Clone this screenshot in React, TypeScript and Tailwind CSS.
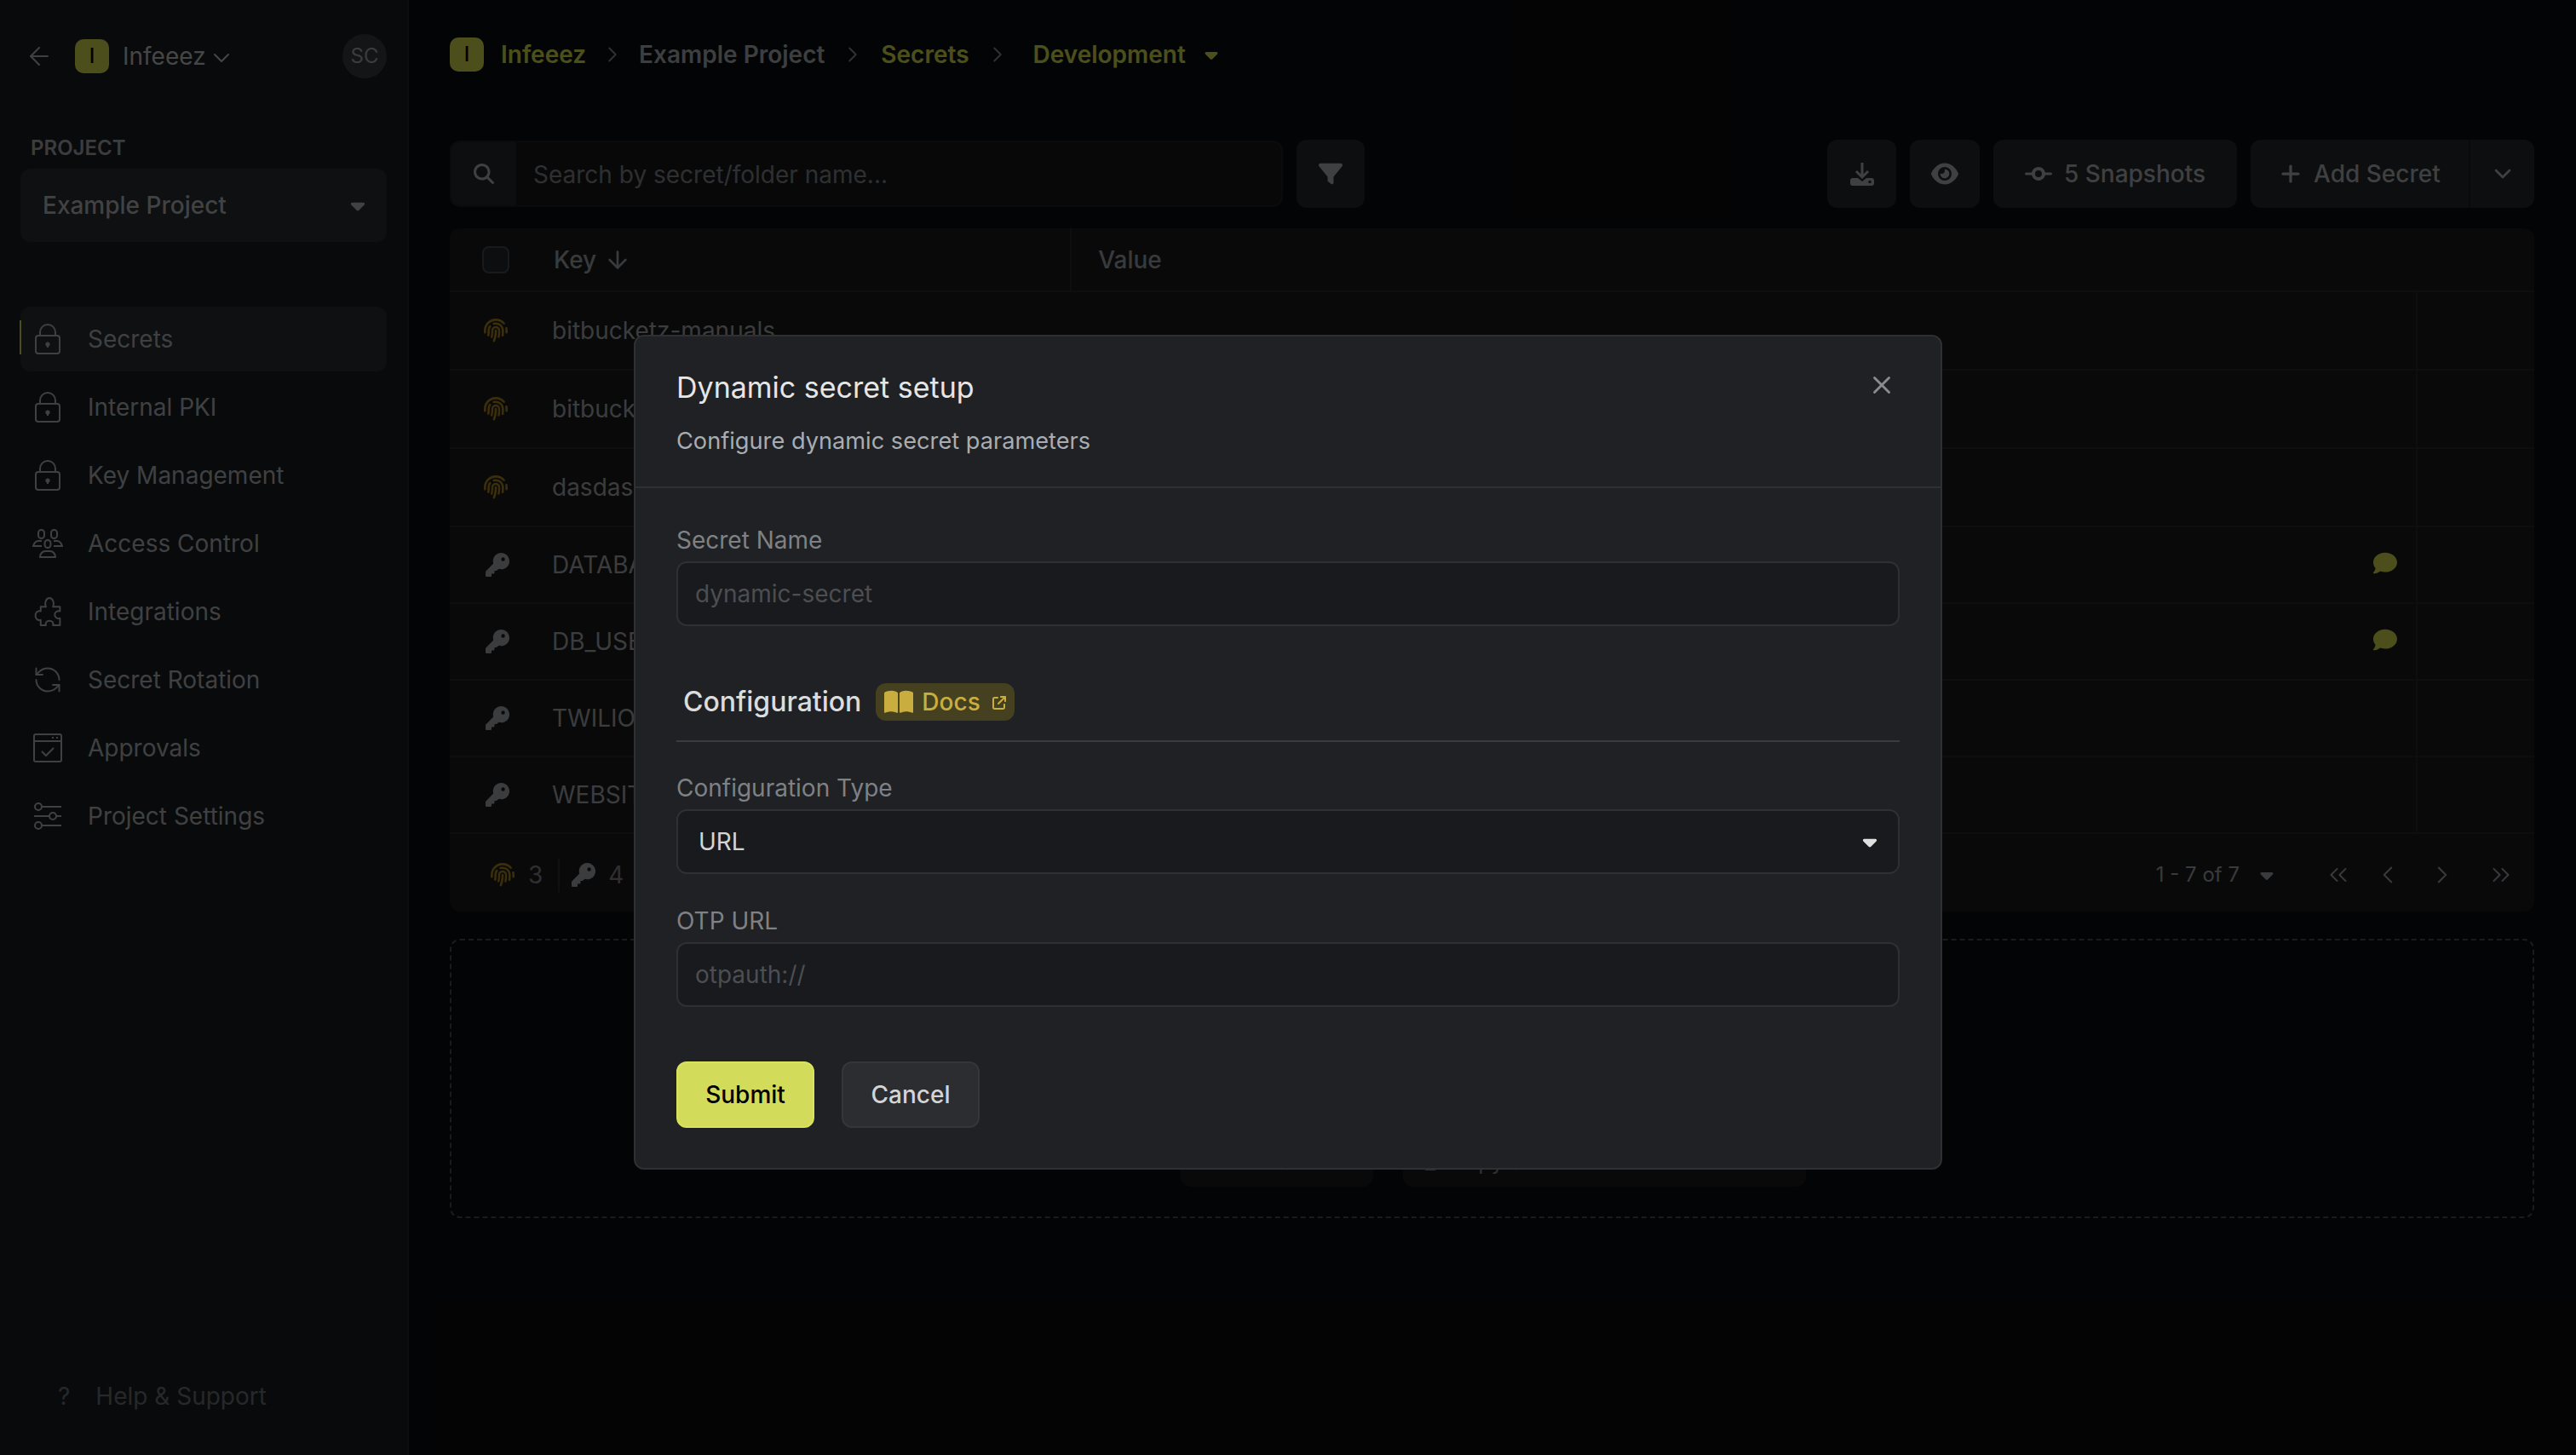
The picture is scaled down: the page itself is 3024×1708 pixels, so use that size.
import {
  ArrowDown,
  ArrowLeft,
  ChevronDown,
  ChevronLeft,
  ChevronRight,
  ChevronsLeft,
  ChevronsRight,
  RefreshCcw,
  X,
} from "lucide-react";
import {
  FaArrowUpRightFromSquare,
  FaBookOpen,
  FaCaretDown,
  FaCodeCommit,
  FaComment,
  FaCopy,
  FaEye,
  FaFilter,
  FaFingerprint,
  FaKey,
  FaMagnifyingGlass,
  FaPlus,
} from "react-icons/fa6";

const LockIcon = () => (
  <svg viewBox="0 0 30 36" className="h-9 w-[30px]" fill="none" stroke="currentColor" strokeWidth={2}>
    <rect x="1" y="14" width="28" height="21" rx="3" />
    <path d="M6 14V10a9 9 0 0 1 18 0v4" />
    <circle cx="15" cy="24" r="1.6" fill="currentColor" />
    <path d="M15 25v3" />
  </svg>
);

const TeamIcon = () => (
  <svg viewBox="0 0 36 36" className="h-9 w-9" fill="none" stroke="currentColor" strokeWidth={2}>
    <rect x="7" y="2" width="7" height="10" rx="3.5" />
    <rect x="22" y="2" width="7" height="10" rx="3.5" />
    <rect x="14.5" y="14" width="7" height="9" rx="3.5" />
    <path d="M11 15H7c-3 0-5 3-6 6h10" />
    <path d="M25 15h4c3 0 5 3 6 6H25" />
    <path d="M9 34c0-4 3-7 6-7h6c3 0 6 3 6 7z" />
  </svg>
);

const PuzzleIcon = () => (
  <svg
    viewBox="0 0 30 35"
    className="h-9 w-8"
    fill="none"
    stroke="currentColor"
    strokeWidth={1.9}
    strokeLinejoin="round"
  >
    <path d="M7 33v-6c-4 1-6-2-6-5s2-6 6-5V12h6c-2-4 0-10 4-10s6 6 4 10h8v5c-3-1-6 1-6 4s3 5 6 4v8h-8c1-3-1-5-4-5s-5 2-4 5z" />
  </svg>
);

const ApprovalsIcon = () => (
  <svg viewBox="0 0 34 34" className="h-[34px] w-[34px]" fill="none" stroke="currentColor" strokeWidth={2}>
    <rect x="1" y="1" width="32" height="32" rx="2" />
    <path d="M1 9h32" />
    <path d="M22 5h2M27 5h2" />
    <path d="M10 21l5 5 9-9" />
  </svg>
);

const SlidersIcon = () => (
  <svg viewBox="0 0 34 34" className="h-[34px] w-[34px]" fill="none" stroke="currentColor" strokeWidth={2}>
    <circle cx="6" cy="6" r="4" />
    <path d="M10 6h23" />
    <circle cx="23" cy="17" r="4" />
    <path d="M1 17h18M27 17h6" />
    <circle cx="6" cy="28" r="4" />
    <path d="M10 28h23" />
  </svg>
);

const TrayDownloadIcon = () => (
  <svg viewBox="0 0 28 27" className="h-[27px] w-[28px]" fill="currentColor">
    <path d="M14 0v16M7 10l7 7 7-7" fill="none" stroke="currentColor" strokeWidth={3} />
    <path d="M3 18h6l5 4 5-4h6a3 3 0 0 1 3 3v3a3 3 0 0 1-3 3H3a3 3 0 0 1-3-3v-3a3 3 0 0 1 3-3z" />
    <circle cx="23" cy="22.5" r="1.7" fill="#26292d" />
  </svg>
);

const navItems = [
  { label: "Secrets", icon: <LockIcon />, active: true },
  { label: "Internal PKI", icon: <LockIcon /> },
  { label: "Key Management", icon: <LockIcon /> },
  { label: "Access Control", icon: <TeamIcon /> },
  { label: "Integrations", icon: <PuzzleIcon /> },
  { label: "Secret Rotation", icon: <RefreshCcw size={36} strokeWidth={1.3} /> },
  { label: "Approvals", icon: <ApprovalsIcon /> },
  { label: "Project Settings", icon: <SlidersIcon /> },
];

const rows = [
  { name: "bitbucketz-manuals", dynamic: true, height: "h-[92px]" },
  { name: "bitbucketz-manuals", dynamic: true, height: "h-[92px]" },
  { name: "dasdasdas", dynamic: true, height: "h-[92px]" },
  { name: "DATABASE_URL", comment: true, height: "h-[90px]" },
  { name: "DB_USER", comment: true, height: "h-[90px]" },
  { name: "TWILIO_AUTH_TOKEN", height: "h-[90px]" },
  { name: "WEBSITE_URL", height: "h-[90px]" },
];

const Sidebar = () => (
  <aside className="flex w-[480px] shrink-0 flex-col border-r-2 border-[#24272a] bg-[#1c1f22]">
    <div className="flex h-[134px] items-center justify-between pl-[29px] pr-[24px] pb-[2px]">
      <div className="flex items-center">
        <ArrowLeft size={34} strokeWidth={1.5} className="text-[#b5b8bc]" />
        <span className="ml-[25px] flex h-10 w-10 items-center justify-center rounded-[10px] bg-[#dbe24f] text-[24px] font-medium text-black">
          I
        </span>
        <span className="ml-[16px] text-[28px] text-[#c6c9cc]">Infeeez</span>
        <ChevronDown size={32} strokeWidth={1.5} className="ml-[2px] mt-1 text-[#c6c9cc]" />
      </div>
      <span className="flex h-[52px] w-[52px] items-center justify-center rounded-full bg-[#3a3d41] text-[24px] text-[#a8abaf]">
        SC
      </span>
    </div>
    <p className="ml-[36px] mt-[24px] text-[24px] leading-8 font-semibold text-[#a9acb0]">PROJECT</p>
    <div className="mx-6 mt-[8px] flex h-[86px] items-center justify-between rounded-xl bg-[#2a2e33] pl-[26px] pr-[21px]">
      <span className="text-[28px] font-medium text-[#b9bcc0]">Example Project</span>
      <FaCaretDown size={26} className="text-[#b9bcc0]" />
    </div>
    <nav className="mt-[74px] flex flex-col">
      {navItems.map((item) => (
        <div key={item.label} className="relative mx-6 flex h-20 items-center py-[2px]">
          <div
            className={`flex h-full w-full items-center rounded-xl pl-[14px] ${item.active ? "bg-[#2a2e33]" : ""}`}
          >
            <span className="flex w-[36px] justify-center text-[#b5b8bc]">{item.icon}</span>
            <span className="ml-[29px] text-[28px] text-[#b5b8bc]">{item.label}</span>
          </div>
          {item.active && <span className="absolute -left-px top-[18px] h-10 w-[2px] bg-[#dbe24f]" />}
        </div>
      ))}
    </nav>
    <div className="mt-auto mb-[48px] ml-[68px] flex items-center text-[#6f7276]">
      <span className="text-[28px] font-normal">?</span>
      <span className="ml-[30px] text-[28px]">Help &amp; Support</span>
    </div>
  </aside>
);

const ToolButton = ({ className, children }: { className: string; children: React.ReactNode }) => (
  <div className={`flex h-20 items-center justify-center rounded-xl bg-[#26292d] text-[#b5b8bc] ${className}`}>
    {children}
  </div>
);

const Breadcrumbs = () => (
  <div className="flex h-[126px] items-center pt-[2px] text-[28px] font-semibold">
    <span className="flex h-10 w-10 items-center justify-center rounded-[10px] bg-[#dbe24f] text-[24px] font-medium text-black">
      I
    </span>
    <span className="ml-5 text-[#dbe24f]">Infeeez</span>
    <ChevronRight size={30} strokeWidth={1.5} className="mx-4 text-[#8b8e92]" />
    <span className="text-[#aeb1b5]">Example Project</span>
    <ChevronRight size={30} strokeWidth={1.5} className="mx-[18px] text-[#8b8e92]" />
    <span className="text-[#dbe24f]">Secrets</span>
    <ChevronRight size={30} strokeWidth={1.5} className="ml-[18px] mr-[27px] text-[#8b8e92]" />
    <span className="text-[#dbe24f]">Development</span>
    <FaCaretDown size={24} className="ml-[18px] text-[#dbe24f]" />
  </div>
);

const SecretsTable = () => (
  <div className="mt-6 rounded-xl bg-[#1a1c1f]">
    <div className="flex h-[75px] items-center border-b-2 border-[#26282b]">
      <span className="ml-[38px] h-8 w-8 rounded-lg border-2 border-[#494c50] bg-[#26292d]" />
      <span className="ml-[52px] text-[28px] font-medium text-[#a2a5a9]">Key</span>
      <ArrowDown size={32} strokeWidth={2} className="ml-[9px] text-[#a2a5a9]" />
      <span className="ml-[515px] flex h-full items-center border-l-2 border-[#26282b] pl-[31px] text-[28px] font-medium text-[#a2a5a9]">
        Value
      </span>
    </div>
    {rows.map((row, i) => (
      <div key={i} className={`flex items-center border-b-2 border-[#26282b] ${row.height}`}>
        <span className={`ml-[40px] w-[28px] ${row.dynamic ? "text-[#a9841f]" : "text-[#a8abaf]"}`}>
          {row.dynamic ? <FaFingerprint size={28} /> : <FaKey size={28} className="ml-[2px]" />}
        </span>
        <span className="ml-[52px] w-[2069px] text-[28px] text-[#a8abaf]">{row.name}</span>
        <span className="mb-[4px] ml-[69px] w-[28px] text-[#dbe24f]">{row.comment && <FaComment size={28} />}</span>
        <span className="ml-[22px] h-full border-l-2 border-[#26282b]" />
      </div>
    ))}
    <div className="flex h-[91px] items-center pt-[5px] text-[#85888c]">
      <FaFingerprint size={28} className="ml-[48px] text-[#a9841f]" />
      <span className="ml-[16px] text-[28px]">3</span>
      <span className="ml-[18px] h-10 border-l-2 border-[#2f3236]" />
      <FaKey size={28} className="ml-[14px] text-[#a8abaf]" />
      <span className="ml-[15px] text-[28px]">4</span>
      <span className="ml-auto text-[24px] text-[#a2a5a9]">1 - 7 of 7</span>
      <FaCaretDown size={24} className="ml-[20px] text-[#a2a5a9]" />
      <div className="ml-[55px] mr-[22px] flex items-center text-[#a2a5a9]">
        <ChevronsLeft size={34} strokeWidth={1.4} />
        <ChevronLeft size={34} strokeWidth={1.4} className="ml-6" />
        <ChevronRight size={34} strokeWidth={1.4} className="ml-[30px]" />
        <ChevronsRight size={34} strokeWidth={1.4} className="ml-[35px]" />
      </div>
    </div>
  </div>
);

const FieldLabel = ({ children }: { children: React.ReactNode }) => (
  <label className="block text-[28px] leading-10 text-[#7e8185]">{children}</label>
);

const TextInput = ({ placeholder }: { placeholder: string }) => (
  <input
    readOnly
    placeholder={placeholder}
    className="mt-[5px] block h-[76px] w-full rounded-xl border-2 border-[#2e3034] bg-[#191a1d] px-[20px] text-[28px] text-[#d4d4d4] outline-none placeholder:text-[#4c4e52]"
  />
);

const SetupModal = () => (
  <div className="absolute inset-0 bg-black/65">
    <div className="mx-auto mt-[393px] h-[980px] w-[1536px] rounded-xl border-2 border-[#2e3034] bg-[#1f2124]">
      <div className="relative h-[178px] border-b-2 border-[#2e3034] px-12 pt-[36px]">
        <h2 className="text-[34px] leading-12 font-normal text-[#e6e6e6]">Dynamic secret setup</h2>
        <p className="mt-[19px] text-[27.2px] leading-10 text-[#a8adb3]">Configure dynamic secret parameters</p>
        <X size={34} strokeWidth={2} className="absolute right-[52px] top-[40px] text-[#8a8c8e]" />
      </div>
      <div className="px-12 pt-[41px]">
        <FieldLabel>Secret Name</FieldLabel>
        <TextInput placeholder="dynamic-secret" />
        <div className="mt-[66px] flex h-[45px] items-center pl-2">
          <h3 className="text-[32px] font-medium text-[#dcdcdc]">Configuration</h3>
          <span className="ml-[17px] flex h-[44px] w-[163px] items-center rounded-xl bg-[#45401f] pl-[10px] text-[#c9ae3f]">
            <FaBookOpen size={34} />
            <span className="ml-[10px] text-[28px] font-medium">Docs</span>
            <FaArrowUpRightFromSquare size={16} className="ml-[14px] mt-[3px]" />
          </span>
        </div>
        <div className="mt-[23px] border-b-2 border-[#3a3c40]" />
        <div className="mt-[34px]">
          <FieldLabel>Configuration Type</FieldLabel>
          <div className="mt-[5px] flex h-[76px] items-center justify-between rounded-xl border-2 border-[#2e3034] bg-[#191a1d] pl-[24px] pr-[20px]">
            <span className="text-[28px] text-[#d4d4d4]">URL</span>
            <FaCaretDown size={26} className="text-[#e0e0e0]" />
          </div>
        </div>
        <div className="mt-[35px]">
          <FieldLabel>OTP URL</FieldLabel>
          <TextInput placeholder="otpauth://" />
        </div>
        <div className="mt-[64px] flex gap-[32px]">
          <button className="h-[78px] w-[162px] rounded-xl border-2 border-[#d9e25b] bg-[#d3dc5a] text-[28px] font-medium text-black">
            Submit
          </button>
          <button className="h-[78px] w-[162px] rounded-xl border-2 border-[#34363a] bg-[#2c2d31] text-[28px] font-medium text-[#d4d4d4]">
            Cancel
          </button>
        </div>
      </div>
    </div>
  </div>
);

export default function App() {
  return (
    <div className="relative flex h-[1708px] w-[3024px] overflow-hidden bg-[#0a0c0f] font-['Inter',sans-serif]">
      <Sidebar />
      <main className="flex-1 pl-[48px] pr-[49px]">
        <Breadcrumbs />
        <div className="mt-[38px] flex items-center">
          <div className="flex h-[78px] w-[978px] items-center overflow-hidden rounded-xl border-2 border-[#1f2124] bg-[#17191c]">
            <span className="flex h-full w-[76px] items-center justify-center bg-[#26292d] text-[#b5b8bc]">
              <FaMagnifyingGlass size={24} />
            </span>
            <span className="ml-[20px] pt-[2px] text-[28px] text-[#85888c]">Search by secret/folder name...</span>
          </div>
          <ToolButton className="ml-[16px] w-[80px]">
            <FaFilter size={28} />
          </ToolButton>
          <ToolButton className="ml-auto w-[81px]">
            <TrayDownloadIcon />
          </ToolButton>
          <ToolButton className="ml-[16px] w-[82px]">
            <FaEye size={32} />
          </ToolButton>
          <ToolButton className="ml-[16px] w-[286px] text-[28px] font-medium">
            <FaCodeCommit size={32} />
            <span className="ml-[14px]">5 Snapshots</span>
          </ToolButton>
          <div className="ml-[16px] flex h-20 w-[333px] items-center rounded-xl bg-[#26292d] text-[28px] font-medium text-[#b5b8bc]">
            <FaPlus size={26} className="ml-[34px]" />
            <span className="ml-[14px]">Add Secret</span>
            <span className="ml-auto flex h-full w-[77px] items-center justify-center border-l-2 border-[#1c1f22]">
              <ChevronDown size={32} strokeWidth={2} />
            </span>
          </div>
        </div>
        <SecretsTable />
        <div className="relative mt-[32px] h-[328px] rounded-xl border-2 border-dashed border-[#4a4d52]">
          <div className="absolute left-[856px] top-[229px] flex gap-[35px]">
            <div className="flex h-[60px] w-[226px] items-center justify-center gap-2 rounded-xl bg-[#1a1c1f] text-[26px] text-[#85888c]">
              <FaPlus size={22} />
              <span>Add Secret</span>
            </div>
            <div className="flex h-[60px] w-[473px] items-center justify-center gap-2 rounded-xl bg-[#1a1c1f] text-[26px] text-[#85888c]">
              <FaCopy size={22} />
              <span>Copy Secrets From Environment</span>
            </div>
          </div>
        </div>
      </main>
      <SetupModal />
    </div>
  );
}
